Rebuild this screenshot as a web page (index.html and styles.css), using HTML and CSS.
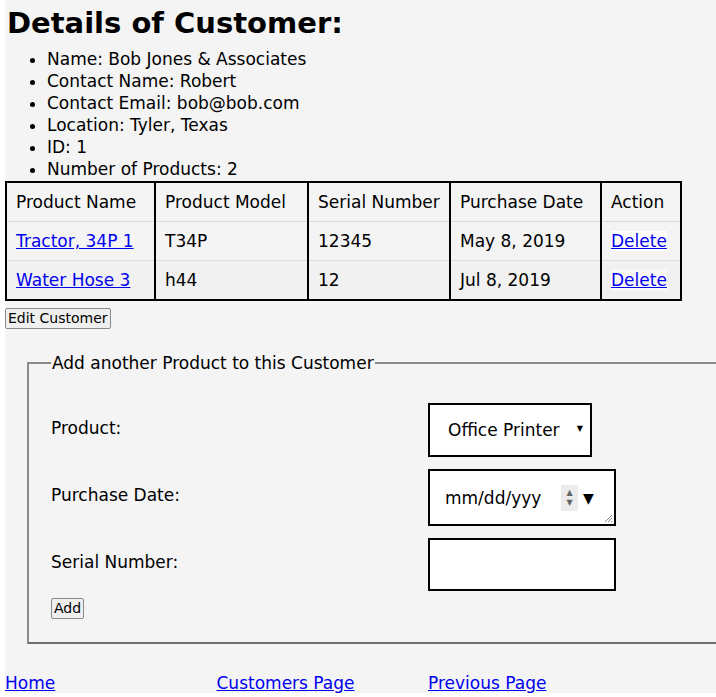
FILE: index.html
```html
<!DOCTYPE html>
<html lang="en">
<head>
<meta charset="utf-8">
<title>Customer Details</title>
<link rel="stylesheet" href="styles.css">
</head>
<body>
<div class="page">
  <h1 class="title">Details of Customer:</h1>
  <ul class="info">
    <li>Name: Bob Jones &amp; Associates</li>
    <li>Contact Name: Robert</li>
    <li>Contact Email: bob@bob.com</li>
    <li>Location: Tyler, Texas</li>
    <li>ID: 1</li>
    <li>Number of Products: 2</li>
  </ul>
  <table class="products">
    <colgroup>
      <col class="c1"><col class="c2"><col class="c3"><col class="c4"><col class="c5">
    </colgroup>
    <thead>
      <tr><th>Product Name</th><th>Product Model</th><th>Serial Number</th><th>Purchase Date</th><th>Action</th></tr>
    </thead>
    <tbody>
      <tr class="r1"><td><a href="#">Tractor, 34P 1</a></td><td>T34P</td><td>12345</td><td>May 8, 2019</td><td><a href="#" class="del del1">Delete</a></td></tr>
      <tr class="r2"><td><a href="#">Water Hose 3</a></td><td>h44</td><td>12</td><td>Jul 8, 2019</td><td><a href="#" class="del del2">Delete</a></td></tr>
    </tbody>
  </table>
  <button class="btn edit" type="button">Edit Customer</button>
  <fieldset class="addbox">
    <legend>Add another Product to this Customer</legend>
    <div class="formgrid">
      <label class="lbl lbl-product" for="product">Product:</label>
      <div class="selwrap">
        <select id="product" class="sel">
          <option>Office Printer</option>
          <option>Tractor, 34P</option>
          <option>Water Hose</option>
        </select>
        <span class="selarrow">&#9660;</span>
      </div>
      <label class="lbl lbl-date">Purchase Date:</label>
      <div class="datebox">
        <span class="datetext">mm/dd/yyy</span>
        <span class="spin"><span class="up">&#9650;</span><span class="down">&#9660;</span></span>
        <span class="drop">&#9660;</span>
        <svg class="grip" width="10" height="10" viewBox="0 0 10 10"><path d="M9 2 L2 9 M9 5 L5 9 M9 8 L8 9" stroke="#888" stroke-width="1" fill="none"/></svg>
      </div>
      <label class="lbl lbl-serial" for="serial">Serial Number:</label>
      <input id="serial" class="txt" type="text">
    </div>
    <button class="btn add" type="button">Add</button>
  </fieldset>
  <nav class="footer">
    <a href="#">Home</a>
    <a href="#">Customers Page</a>
    <a href="#">Previous Page</a>
  </nav>
</div>
</body>
</html>
```
FILE: styles.css
```css
html, body {
  margin: 0;
  padding: 0;
  background: #ffffff;
  overflow: hidden;
}
body {
  padding-left: 5px;
  font-family: "DejaVu Sans", sans-serif;
  color: #000;
}
.page {
  background: #f4f4f4;
  overflow: hidden;
}
.title {
  margin: 0;
  height: 48px;
  font-size: 29px;
  line-height: 46px;
  font-weight: bold;
  padding-left: 2px;
}
.info {
  margin: 0;
  padding-left: 42px;
  font-size: 17px;
  line-height: 22px;
}
.products {
  margin-top: 1px;
  border-collapse: collapse;
  table-layout: fixed;
  width: 675px;
  border: 2px solid #000;
  font-size: 17px;
}
.c1 { width: 149px; }
.c2 { width: 153px; }
.c3 { width: 142px; }
.c4 { width: 151px; }
.c5 { width: 80px; }
.products th, .products td {
  text-align: left;
  font-weight: normal;
  padding: 9px 9px;
  line-height: 20px;
  border-left: 2px solid #000;
  border-right: 2px solid #000;
  border-top: 1px solid #dcdcdc;
  border-bottom: 1px solid #dcdcdc;
  white-space: nowrap;
}
.products thead th { border-top: 2px solid #000; }
.products tbody tr:last-child td { border-bottom: 2px solid #000; }
.r2 td { background: #f1f1f1; }
a { color: #0000ee; }
.del1 { background: #ffffff; }
.del2 { background: #f8f8f8; }
.btn {
  font-family: "DejaVu Sans", sans-serif;
  font-size: 14px;
  background: #efefef;
  border: 1px solid #8a8a8a;
  border-radius: 2px;
  padding: 0 2px;
  color: #000;
  line-height: 19px;
}
.edit {
  display: block;
  margin-top: 7px;
}
.addbox {
  margin: 24px -40px 0 22px;
  border: 2px solid #7a7a7a;
  border-color: #8a8a8a #6e6e6e #6e6e6e #8a8a8a;
  padding: 0 22px 23px 22px;
}
.addbox legend {
  font-size: 17px;
  padding: 0 1px;
  margin-left: 0;
  line-height: 20px;
}
.formgrid {
  display: grid;
  grid-template-columns: 377px auto;
  row-gap: 12px;
  align-items: center;
  justify-items: start;
  margin-top: 30px;
  font-size: 17px;
}
.lbl { margin-top: -5px; }
.selwrap {
  position: relative;
  width: 164px;
  height: 54px;
}
.sel {
  appearance: none;
  -webkit-appearance: none;
  width: 164px;
  height: 54px;
  border: 2px solid #000;
  border-radius: 0;
  background: #fff;
  font-family: "DejaVu Sans", sans-serif;
  font-size: 17px;
  padding: 0 0 0 18px;
  color: #000;
}
.selarrow {
  position: absolute;
  right: 9px;
  top: 21px;
  font-size: 8px;
  pointer-events: none;
}
.datebox {
  width: 188px;
  height: 57px;
  box-sizing: border-box;
  border: 2px solid #000;
  background: #fff;
  display: flex;
  align-items: center;
  padding-left: 15px;
  position: relative;
}
.datetext {
  width: 104px;
  white-space: nowrap;
  font-size: 17px;
}
.spin {
  margin-left: 12px;
  width: 17px;
  height: 26px;
  background: #ececec;
  display: flex;
  flex-direction: column;
  align-items: center;
  justify-content: center;
  color: #666;
  font-size: 8px;
  line-height: 10px;
}
.drop {
  margin-left: 5px;
  font-size: 14px;
}
.grip {
  position: absolute;
  right: 1px;
  bottom: 1px;
}
.txt {
  width: 188px;
  height: 53px;
  box-sizing: border-box;
  border: 2px solid #000;
  border-radius: 0;
  background: #fff;
  padding: 0 8px;
  font-size: 17px;
}
.add {
  display: block;
  margin-top: 7px;
}
.footer {
  display: flex;
  margin-top: 29px;
  font-size: 17px;
  line-height: 20px;
}
.footer a { width: 211.5px; }
```
